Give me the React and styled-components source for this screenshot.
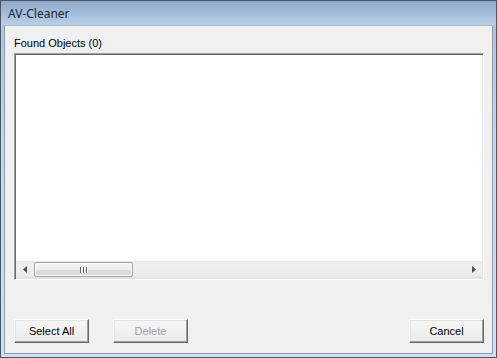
import React from "react";
import styled, { createGlobalStyle } from "styled-components";

const GlobalStyle = createGlobalStyle`
  html, body {
    margin: 0;
    padding: 0;
    overflow: hidden;
    background: #ffffff;
  }
`;

const Window = styled.div`
  width: 497px;
  height: 358px;
  box-sizing: border-box;
  border: 1px solid #4a5666;
  background: linear-gradient(180deg, #a9c0dc 0%, #c3d7ec 40%, #cfe0f1 100%);
  padding: 0 3px 3px 3px;
  display: flex;
  flex-direction: column;
`;

const TitleBar = styled.div`
  height: 24px;
  display: flex;
  align-items: center;
  font-family: "Noto Sans", "DejaVu Sans", sans-serif;
  font-size: 12px;
  color: #1c2533;
  background: linear-gradient(180deg, #8fa9c8 0%, #a3bcd9 50%, #b9cfe7 100%);
  margin: 0 -3px;
  padding-left: 7px;
`;

const Body = styled.div`
  flex: 1;
  background: #f0f0f0;
  border: 1px solid #8b9bb0;
  border-top-color: #a6b9cf;
  padding: 11px 8px 10px 9px;
  display: flex;
  flex-direction: column;
  font-family: "Liberation Sans", Arial, sans-serif;
  font-size: 11px;
  color: #000;
`;

const Label = styled.div`
  height: 13px;
  line-height: 13px;
  margin-bottom: 3px;
`;

const ListBox = styled.div`
  height: 227px;
  box-sizing: border-box;
  background: #ffffff;
  border-top: 1px solid #a0a0a0;
  border-left: 1px solid #a0a0a0;
  border-right: 1px solid #ffffff;
  border-bottom: 1px solid #ffffff;
  box-shadow: inset 1px 1px 0 #696969, inset -1px -1px 0 #e3e3e3;
  display: flex;
  flex-direction: column;
  padding: 1px;
`;

const ListArea = styled.div`
  flex: 1;
`;

const HScroll = styled.div`
  height: 17px;
  display: flex;
  align-items: stretch;
  background: linear-gradient(180deg, #e6e6e6 0%, #f0f0f0 20%, #ececec 80%, #e2e2e2 100%);
`;

const Arrow = styled.div`
  width: 17px;
  display: flex;
  align-items: center;
  justify-content: center;
`;

const Thumb = styled.div`
  width: 99px;
  margin: 1px 0 1px 1px;
  box-sizing: border-box;
  border: 1px solid #a2a2a2;
  border-radius: 2px;
  background: linear-gradient(180deg, #f6f6f6 0%, #ececec 50%, #dcdcdc 51%, #d8d8d8 100%);
  box-shadow: inset 0 0 0 1px #fbfbfb;
  display: flex;
  align-items: center;
  justify-content: center;
`;

const Grip = styled.div`
  display: flex;
  gap: 2px;
  span {
    width: 1px;
    height: 6px;
    background: #6a6a6a;
    box-shadow: 1px 0 0 #f8f8f8;
  }
`;

const Spacer = styled.div`
  flex: 1;
`;

const ButtonRow = styled.div`
  display: flex;
  align-items: center;
  margin-top: 39px;
  gap: 24px;
`;

const Button = styled.button`
  width: 75px;
  height: 24px;
  box-sizing: border-box;
  padding: 0;
  font-family: "Liberation Sans", Arial, sans-serif;
  font-size: 11px;
  color: ${(p) => (p.disabled ? "#a0a0a0" : "#000")};
  background: linear-gradient(180deg, #f6f6f6 0%, #ececec 100%);
  border-top: 1px solid #ffffff;
  border-left: 1px solid #ffffff;
  border-right: 1px solid #696969;
  border-bottom: 1px solid #696969;
  box-shadow: inset -1px -1px 0 #a0a0a0, inset 1px 1px 0 #e3e3e3;
  border-radius: 0;
  cursor: default;
`;

const LeftArrow = () => (
  <svg width="4" height="7" viewBox="0 0 4 7">
    <path d="M4 0 L0 3.5 L4 7 Z" fill="#4d4d4d" />
  </svg>
);

const RightArrow = () => (
  <svg width="4" height="7" viewBox="0 0 4 7">
    <path d="M0 0 L4 3.5 L0 7 Z" fill="#4d4d4d" />
  </svg>
);

export default function App() {
  return (
    <>
      <GlobalStyle />
      <Window>
        <TitleBar>AV-Cleaner</TitleBar>
        <Body>
          <Label>Found Objects (0)</Label>
          <ListBox>
            <ListArea />
            <HScroll>
              <Arrow>
                <LeftArrow />
              </Arrow>
              <Thumb>
                <Grip>
                  <span />
                  <span />
                  <span />
                </Grip>
              </Thumb>
              <Spacer />
              <Arrow>
                <RightArrow />
              </Arrow>
            </HScroll>
          </ListBox>
          <ButtonRow>
            <Button>Select All</Button>
            <Button disabled>Delete</Button>
            <Spacer />
            <Button>Cancel</Button>
          </ButtonRow>
        </Body>
      </Window>
    </>
  );
}
